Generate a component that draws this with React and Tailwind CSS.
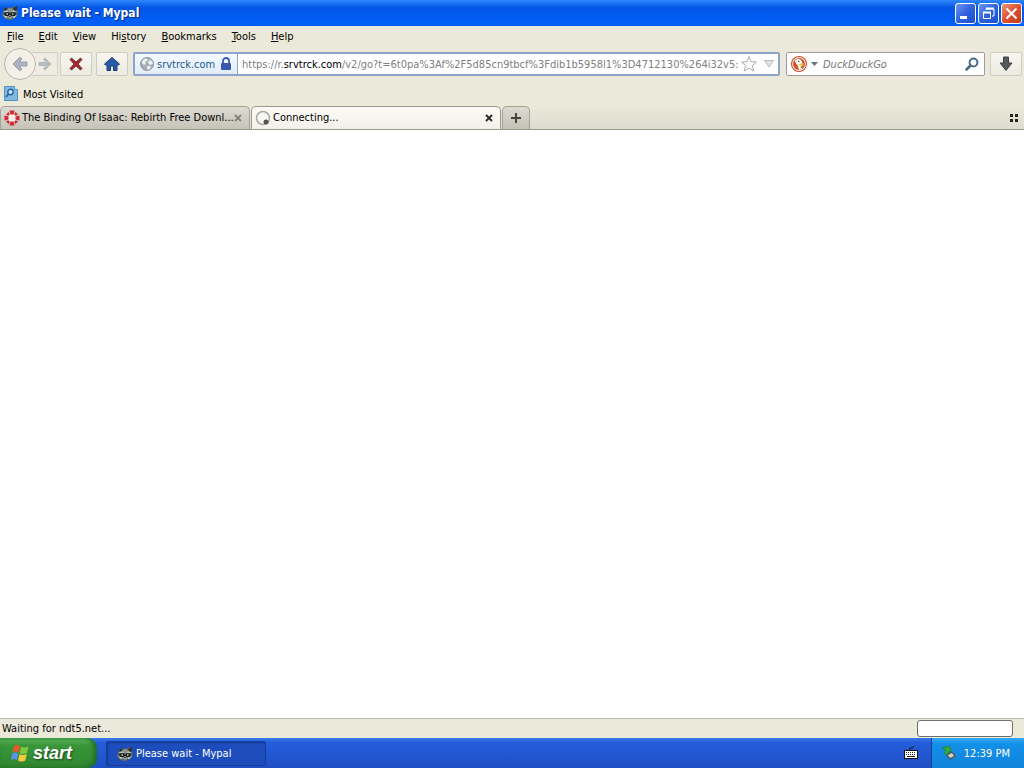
import React from 'react';

function Raccoon() {
  return (
    <svg width="16" height="16" viewBox="0 0 16 16" className="shrink-0" aria-hidden="true">
      <path d="M2 4l2-2 3 1 4-1 4-1 0 4 1 4-3 4-4 2-3 0-4-2-2-3 1-3z" fill="#5c6866" />
      <path d="M2 4l2-2 2 2-3 2zM11 3l4-2 0 4-2 1z" fill="#2a3333" />
      <path d="M5 4l3-1 3 1-2 3H7z" fill="#87948f" />
      <path d="M2 8l4-1 2 2 2-2 4 1-1 3-3 0-2-1-2 1-3 0z" fill="#161c1c" />
      <path d="M1 7l4-2 2 2-4 0zM15 7l-4-2-2 2 4 0z" fill="#b9c3bc" />
      <path d="M1 10l5 2-2 1zM15 10l-5 2 2 1z" fill="#dce2da" />
      <circle cx="5.2" cy="9" r=".9" fill="#b4beb8" />
      <circle cx="10.800" cy="9" r=".9" fill="#b4beb8" />
      <path d="M6 11.500l2-1.500 2 1.500-1 2H7z" fill="#a3ada6" />
      <path d="M7 11h2l-1 1.500z" fill="#111" />
    </svg>
  );
}

function WindowButton({ label, tone, children }) {
  return (
    <button type="button" aria-label={label} className={`flex h-[21px] w-[21px] items-center justify-center rounded-[3px] border border-white ${tone}`}>
      <svg width="19" height="19" viewBox="0 0 19 19" fill="none" stroke="#fff">{children}</svg>
    </button>
  );
}

const blueTone = 'bg-linear-to-br from-[#6d95f2] via-[#2f62dc] to-[#1c4fd0]';
const redTone = 'bg-linear-to-br from-[#ee9272] via-[#dc5130] to-[#c03a16]';
const toolButton = 'flex h-6 w-8 shrink-0 items-center justify-center rounded-[2px] border border-[#cfcdc2] bg-linear-to-b from-[#f8f7f1] to-[#edeadf]';

const menus = [
  ['', 'F', 'ile'],
  ['', 'E', 'dit'],
  ['', 'V', 'iew'],
  ['Hi', 's', 'tory'],
  ['', 'B', 'ookmarks'],
  ['', 'T', 'ools'],
  ['', 'H', 'elp'],
];

function TitleBar() {
  return (
    <header className="flex h-[26px] shrink-0 items-center bg-linear-to-b from-[#2f86fb] via-[#0355e6] via-30% to-[#0262fb] pr-[2px] pl-[2px]">
      <Raccoon />
      <h1 className="ml-[3px] flex-1 font-['DejaVu_Sans_Condensed','Noto_Sans',sans-serif] text-[12px] font-bold text-white [text-shadow:1px_1px_1px_#0a2f8c]">Please wait - Mypal</h1>
      <div className="flex gap-[2px]">
        <WindowButton label="Minimize" tone={blueTone}><path d="M4 13.500h7" strokeWidth="3" /></WindowButton>
        <WindowButton label="Restore" tone={blueTone}>
          <path d="M7 6V5h8v7h-2" /><path d="M7 4.500h8" strokeWidth="2" />
          <path d="M4.500 8.500h7v6h-7z" /><path d="M4 8.500h8" strokeWidth="2" />
        </WindowButton>
        <WindowButton label="Close" tone={redTone}><path d="M4.500 4.500l10 10M14.500 4.500l-10 10" strokeWidth="2" /></WindowButton>
      </div>
    </header>
  );
}

function NavBar() {
  return (
    <div className="flex h-9 items-center pr-[2px] pl-1">
      <div className="flex items-center">
        <button type="button" aria-label="Back" className="z-10 flex h-8 w-8 items-center justify-center rounded-full border border-[#b9b7ac] bg-[#f3f1e7]">
          <svg width="18" height="18" viewBox="0 0 18 18"><path d="M2 9l7-7 2 2-3 3h8v4H8l3 3-2 2z" fill="#adb4c0" stroke="#929cab" /></svg>
        </button>
        <button type="button" aria-label="Forward" className="-ml-1 flex h-6 w-[26px] items-center justify-center rounded-r-[2px] border border-l-0 border-[#d2d0c5] bg-[#efede2]">
          <svg width="14" height="14" viewBox="0 0 14 14"><path d="M13 7L7 1 5.500 2.500 8.500 5.500H1v3h7.500L5.500 11.500 7 13z" fill="#b8bdc0" stroke="#a3a9ad" strokeWidth=".7" /></svg>
        </button>
      </div>
      <button type="button" aria-label="Stop" className={`ml-[2px] ${toolButton}`}>
        <svg width="16" height="16" viewBox="0 0 16 16"><path d="M2 3.500l1.500-1.500L8 6l4.500-4L14 3.500 10 8l4 4.500-1.500 1.500L8 10l-4.500 4L2 12.500 6 8z" fill="#b3262b" stroke="#4f2325" strokeWidth=".8" /></svg>
      </button>
      <button type="button" aria-label="Home" className={`ml-1 ${toolButton}`}>
        <svg width="18" height="16" viewBox="0 0 18 16"><path d="M1.500 8L9 1.500 16.500 8l-1 1H14v5.500h-3.500V10h-3v4.500H4V9H2.500z" fill="#2759a6" stroke="#1b3f7b" /></svg>
      </button>
      <div className="ml-[5px] flex h-6 min-w-0 flex-1 items-center rounded-[2px] border-2 border-[#8fa3cc] bg-white">
        <button type="button" className="flex h-full shrink-0 items-center border-r border-[#8ea5c4] bg-linear-to-b from-[#f4f9ff] to-[#e1edfa] pr-[5px] pl-[5px] text-[#1f5a8b]">
          <svg width="14" height="14" viewBox="0 0 14 14" aria-hidden="true">
            <circle cx="7" cy="7" r="6.500" fill="#a5adb4" stroke="#8e979f" />
            <path d="M2 4l3-2.500 3 .5-1 2-2 1 1 2-2 1-2-2zM9 3l3 1 1 3-3 1-2-2zM7 9l3 0 1 2-3 2-1-2z" fill="#edf1f4" />
          </svg>
          <span className="ml-[3px] w-[63px] pt-[1px] text-left">srvtrck.com</span>
          <svg width="12" height="14" viewBox="0 0 12 14" aria-hidden="true"><path d="M3 6V4a3 3 0 016 0v2" fill="none" stroke="#3b5caf" strokeWidth="1.800" /><rect x="1" y="6" width="10" height="7" rx="1" fill="#3858ad" /></svg>
        </button>
        <div className="min-w-0 flex-1 overflow-hidden pt-[1px] pl-1 whitespace-nowrap text-[#808080]" role="textbox" aria-label="Address" tabIndex={0}>
          https://r.<span className="text-black">srvtrck.com</span>/v2/go?t=6t0pa%3Af%2F5d85cn9tbcf%3Fdib1b5958l1%3D4712130%264i32v5:
        </div>
        <button type="button" aria-label="Bookmark this page">
          <svg width="18" height="18" viewBox="0 0 18 18"><path d="M9 1.500l2.100 5.100 5.400.4-4.100 3.500 1.300 5.500L9 13.200 4.300 16l1.300-5.500L1.500 7l5.400-.4z" fill="#fcfcfc" stroke="#a9abae" /></svg>
        </button>
        <button type="button" aria-label="Show history" className="mr-1 ml-[6px]">
          <svg width="10" height="8" viewBox="0 0 10 8"><path d="M.5 .5h9L5 7z" fill="#e3e3e3" stroke="#b9b9bd" /></svg>
        </button>
      </div>
      <form className="ml-[6px] flex h-6 w-[199px] shrink-0 items-center rounded-[2px] border border-[#9c9da0] bg-white pr-[5px] pl-1" onSubmit={(e) => e.preventDefault()}>
        <button type="button" aria-label="Choose search engine" className="flex items-center gap-1">
          <svg width="16" height="16" viewBox="0 0 16 16">
            <circle cx="8" cy="8" r="8" fill="#c94a22" /><circle cx="8" cy="8" r="6.900" fill="#fff" /><circle cx="8" cy="8" r="6" fill="#d25126" />
            <path d="M4 4.500C6 2 10 2.500 11 5.500l.5 3-1 2 .5 2.500-3 .8L6.500 9C5 7.500 4 6 4 4.500z" fill="#fff" />
            <path d="M8.500 7.500l4.500 0-1 2H8z" fill="#f5bd35" /><path d="M8.500 11l3-1v2.500z" fill="#65a848" /><circle cx="7.700" cy="5.500" r=".8" fill="#284969" />
          </svg>
          <svg width="7" height="4" viewBox="0 0 7 4"><path d="M0 0h7L3.500 4z" fill="#65727a" /></svg>
        </button>
        <input aria-label="Search" placeholder="DuckDuckGo" className="ml-[5px] min-w-0 flex-1 bg-transparent pt-[1px] italic outline-none placeholder:text-[#777]" />
        <button type="submit" aria-label="Submit search">
          <svg width="14" height="14" viewBox="0 0 14 14" fill="none"><circle cx="8.500" cy="5.500" r="3.900" stroke="#4b6d8d" strokeWidth="2" /><path d="M5.500 8.500L1.500 12.500" stroke="#466887" strokeWidth="2.500" strokeLinecap="round" /></svg>
        </button>
      </form>
      <button type="button" aria-label="Downloads" className={`ml-[5px] ${toolButton}`}>
        <svg width="16" height="16" viewBox="0 0 16 16"><path d="M5.500 1h5v6H14l-6 7.500L2 7h3.500z" fill="#555a5d" stroke="#3d4246" /></svg>
      </button>
    </div>
  );
}

function CloseGlyph({ color }) {
  return <svg width="8" height="8" viewBox="0 0 8 8" className={color}><path d="M1 1l6 6M7 1L1 7" stroke="currentColor" strokeWidth="1.800" /></svg>;
}

function Tabs() {
  const tab = 'flex h-[23px] w-[250px] items-center rounded-t-[5px] border border-b-0 pr-[7px] pl-[3px]';
  return (
    <div className="flex h-6 items-end gap-[1px] border-b border-[#9b998f] bg-linear-to-b from-[#ebe9d9] to-[#dedccf]">
      <div className={`${tab} border-[#a5a399] bg-linear-to-b from-[#dddbd1] to-[#c6c3b8]`}>
        <svg width="16" height="16" viewBox="0 0 16 16" className="shrink-0" aria-hidden="true" fill="#d12733">
          <circle cx="8" cy="8" r="4" fill="#f4efe9" />
          <path d="M5.500 .5h5L9.500 4.500h-3zM5.500 15.500h5l-1-4h-3zM.5 5.500v5l4-1v-3zM15.500 5.500v5l-4-1v-3z" />
          <path d="M2 4.500L4.500 2l1.300 2.300-1.500 1.500zM14 4.500L11.500 2l-1.300 2.300 1.500 1.500zM2 11.500L4.500 14l1.300-2.300-1.500-1.500zM14 11.500L11.500 14l-1.300-2.300 1.500-1.500z" />
        </svg>
        <button type="button" className="ml-[2px] min-w-0 flex-1 text-left whitespace-nowrap">The Binding Of Isaac: Rebirth Free Downl...</button>
        <button type="button" aria-label="Close first tab" className="pl-[1px]"><CloseGlyph color="text-[#85827a]" /></button>
      </div>
      <div className={`${tab} border-[#9b998f] bg-linear-to-b from-[#fbfaf6] to-[#f3f1e9]`}>
        <svg width="16" height="16" viewBox="0 0 16 16" aria-hidden="true"><circle cx="8" cy="8" r="6.500" fill="#f7f7f4" stroke="#aaa9a6" strokeWidth="1.500" /><circle cx="11" cy="12" r="2.500" fill="#55524e" /></svg>
        <button type="button" className="ml-[2px] flex-1 text-left">Connecting...</button>
        <button type="button" aria-label="Close second tab"><CloseGlyph color="text-[#292824]" /></button>
      </div>
      <button type="button" aria-label="New tab" className="flex h-[23px] w-7 items-center justify-center rounded-t-[5px] border border-b-0 border-[#a5a399] bg-linear-to-b from-[#dddbd1] to-[#c3c0b5]">
        <svg width="10" height="10" viewBox="0 0 10 10"><path d="M5 0v10M0 5h10" stroke="#45443f" strokeWidth="2" /></svg>
      </button>
      <button type="button" aria-label="List all tabs" className="mr-[6px] mb-[7px] ml-auto">
        <svg width="8" height="8" viewBox="0 0 8 8" fill="#222"><path d="M0 0h3v3H0zM5 0h3v3H5zM0 5h3v3H0zM5 5h3v3H5z" /></svg>
      </button>
    </div>
  );
}

function Taskbar() {
  return (
    <footer className="flex h-[30px] shrink-0 bg-linear-to-b from-[#3a7ae8] via-[#245ddb] via-15% to-[#1f4fc4] text-white">
      <button type="button" className="flex h-full w-[97px] items-center rounded-r-[10px] bg-linear-to-b from-[#5eb55e] via-[#3a963a] via-25% to-[#2f852f] pl-[11px] shadow-[inset_-3px_0_4px_#1f6b22]">
        <svg width="19" height="18" viewBox="0 0 19 18" aria-hidden="true">
          <path d="M3 2q3-2 6 0L7.500 8.500q-3-2-6 0z" fill="#e8592b" /><path d="M10 2.500q3 2 7.500 0L16 9q-4 2-7.500 0z" fill="#84c53f" />
          <path d="M1.200 9.500q3-2 6 0L6 16q-3-2-6 0z" fill="#5c92f0" /><path d="M8.500 10q3 2 7.300 0L14.300 16.500q-4 2-7.300 0z" fill="#f6cb3b" />
        </svg>
        <span className="ml-[3px] font-['Liberation_Sans',sans-serif] text-[18px] leading-5 font-bold italic [text-shadow:1px_1px_2px_#1b4d1d]">start</span>
      </button>
      <button type="button" className="mt-[3px] ml-[9px] flex h-[25px] w-[160px] items-center rounded-[2px] border border-[#173d9a] bg-[#1d4dbd] pl-[10px] shadow-[inset_1px_1px_2px_#143b93]">
        <Raccoon /><span className="ml-[3px]">Please wait - Mypal</span>
      </button>
      <button type="button" aria-label="On-screen keyboard" className="mr-[13px] ml-auto">
        <svg width="14" height="14" viewBox="0 0 14 14"><path d="M5 4q0-2 2-2t3-2" fill="none" stroke="#111" /><path d="M0 4h14v9H0z" fill="#111" /><path d="M1 5h12v7H1z" fill="#fff" /><path d="M2 6.500h10M2 8.500h10" stroke="#222" strokeDasharray="1 1" /><path d="M3 10.500h8" stroke="#222" /></svg>
      </button>
      <div className="flex items-center border-l border-[#0e3f9c] bg-linear-to-b from-[#35aaf5] via-[#1290e8] via-20% to-[#1183dc] pr-[14px] pl-[9px]">
        <svg width="16" height="16" viewBox="0 0 16 16" aria-hidden="true"><path d="M5 10l6-4 4 5-6 4z" fill="#4f5b56" /><path d="M7 10l4-2 2 3-4 2z" fill="#cfd4cd" /><path d="M1 3l8-2 1 7-2-2-2 4-3-2 2-3z" fill="#38ad35" stroke="#1e7628" strokeWidth=".6" /></svg>
        <time className="ml-[7px] pt-[1px]">12:39 PM</time>
      </div>
    </footer>
  );
}

export default function App() {
  return (
    <div className="flex min-h-screen flex-col bg-white font-['DejaVu_Sans_Condensed','Noto_Sans',sans-serif] text-[11px] leading-4 text-black">
      <TitleBar />
      <div className="bg-[#ebe9d9]">
        <nav className="flex h-5 items-center gap-[15px] pt-[1px] pl-[7px]">
          {menus.map(([pre, key, post]) => (
            <button type="button" key={pre + key + post}>{pre}<u>{key}</u>{post}</button>
          ))}
        </nav>
        <NavBar />
        <div className="flex h-6 items-center pl-1">
          <button type="button" className="flex items-center gap-[5px]">
            <svg width="14" height="16" viewBox="0 0 14 16" aria-hidden="true"><path d="M.5 .5h10v3h3v11H.5z" fill="#82b9e1" stroke="#4f91c3" /><circle cx="6.500" cy="6" r="2.700" fill="#cbe6f8" stroke="#23679f" strokeWidth="1.400" /><path d="M4.500 8L2 11" stroke="#23679f" strokeWidth="1.800" /></svg>
            <span className="pt-[1px]">Most Visited</span>
          </button>
        </div>
        <Tabs />
      </div>
      <main className="flex-1 bg-white" />
      <div className="flex h-5 shrink-0 items-center justify-between border-t border-[#b9b7aa] bg-[#ebe9d9] pr-[11px] pl-[2px]">
        <span role="status">Waiting for ndt5.net...</span>
        <div role="progressbar" aria-label="Page load" className="h-[17px] w-24 rounded-[3px] border border-[#6f6e69] bg-white" />
      </div>
      <Taskbar />
    </div>
  );
}
